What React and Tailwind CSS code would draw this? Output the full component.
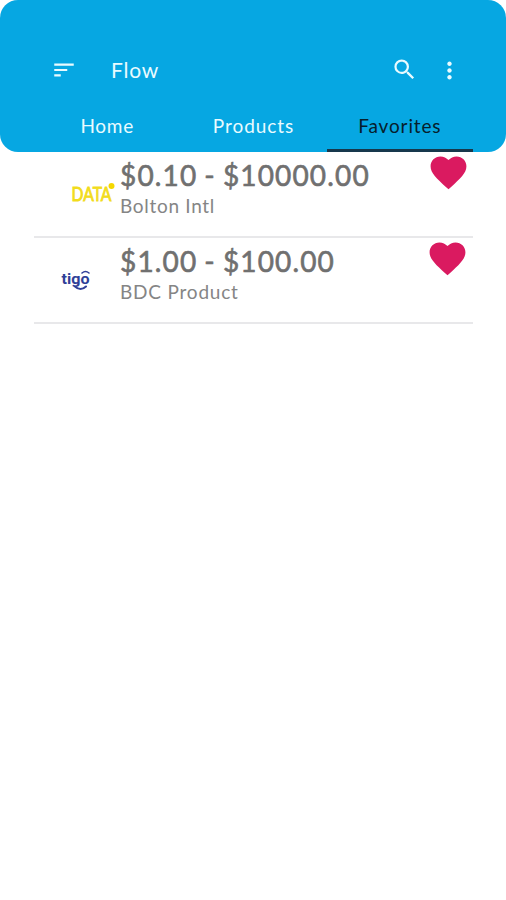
import React, { useState } from 'react';
import { MdFavorite, MdMoreVert, MdSearch, MdSort } from 'react-icons/md';

const tabs = [
  { id: 'home', label: 'Home', spacing: 'tracking-[0.7px]' },
  { id: 'products', label: 'Products', spacing: 'tracking-[0.95px]' },
  { id: 'favorites', label: 'Favorites', spacing: 'tracking-[0.85px]' }
];

const DataLogo = () => (
  <svg className="w-[85px] h-[85px] overflow-visible" viewBox="0 0 85 85" role="img" aria-label="Data">
    <text
      x="37.5"
      y="49"
      textLength="40"
      lengthAdjust="spacingAndGlyphs"
      className="fill-[#f2dc1c] stroke-[#f2dc1c] [stroke-width:0.9px] font-['Lato',sans-serif] text-[19px]"
    >
      DATA
    </text>
    <circle cx="77.5" cy="34" r="3" fill="#f5d800" />
  </svg>
);

const TigoLogo = () => (
  <svg className="w-[85px] h-[85px] overflow-visible" viewBox="0 0 85 85" role="img" aria-label="Tigo">
    <text
      x="27.5"
      y="45.5"
      textLength="28"
      lengthAdjust="spacingAndGlyphs"
      className="fill-[#2f3f98] font-['Roboto',sans-serif] text-[15px] font-bold"
    >
      tigo
    </text>
    <g fill="none" stroke="#2f3f98" strokeLinecap="round">
      <path d="M48 35q3.500-3 7 0" strokeWidth="1.6" />
      <path d="M41 48.500q5.500 5 11 0" strokeWidth="2.1" />
    </g>
  </svg>
);

const favorites = [
  {
    id: 1,
    range: '$0.10 - $10000.00',
    name: 'Bolton Intl',
    Logo: DataLogo,
    heart: 'mr-[3px]',
    nameSpacing: 'tracking-[0.7px]'
  },
  {
    id: 2,
    range: '$1.00 - $100.00',
    name: 'BDC Product',
    Logo: TigoLogo,
    heart: 'mr-[4px]',
    nameSpacing: 'tracking-[0.8px]'
  }
];

const Header = ({ active, onSelect }) => (
  <header className="h-[152px] pl-[34px] pr-[33px] pt-[48px] rounded-[18px] bg-[#06a7e2] text-[#e9fbff] flex flex-col">
    <div className="h-11 flex items-center">
      <button type="button" aria-label="Menu" className="ml-[17px]">
        <MdSort className="size-[26px]" />
      </button>
      <h1 className="ml-[34px] text-[21px] leading-6 tracking-[0.8px]">Flow</h1>
      <button type="button" aria-label="Search" className="ml-auto pb-[2px]">
        <MdSearch className="size-[27px]" />
      </button>
      <button type="button" aria-label="More" className="ml-[18px] mr-[10px]">
        <MdMoreVert className="size-[27px]" />
      </button>
    </div>
    <nav className="flex-1 grid grid-cols-3">
      {tabs.map((tab) => (
        <button
          key={tab.id}
          type="button"
          onClick={() => onSelect(tab.id)}
          className={[
            'border-b-[3px] pt-[10px] text-[19px] leading-none text-center',
            tab.spacing,
            active === tab.id ? 'border-[#17384c] text-[#06202c]' : 'border-transparent'
          ].join(' ')}
        >
          {tab.label}
        </button>
      ))}
    </nav>
  </header>
);

const App = () => {
  const [active, setActive] = useState('favorites');

  return (
    <div className="min-h-screen bg-white font-['Lato',sans-serif]">
      <Header active={active} onSelect={setActive} />
      <ul className="ml-[34px] mr-[33px]">
        {favorites.map(({ id, range, name, Logo, heart, nameSpacing }) => (
          <li key={id} className="h-[86px] border-b-2 border-[#e8e8ea] flex items-start">
            <Logo />
            <div className="flex-1 pl-[1px] pt-[5px] text-[#707070] whitespace-nowrap">
              <p className="text-[28px] leading-9 tracking-[1.15px] word-spacing-tight [word-spacing:-1.3px] [-webkit-text-stroke:0.6px_#707070]">
                {range}
              </p>
              <p className={`text-[19px] leading-[26px] text-[#858585] ${nameSpacing}`}>{name}</p>
            </div>
            <MdFavorite className={`size-[43px] -mt-[1px] shrink-0 text-[#da1a60] ${heart}`} />
          </li>
        ))}
      </ul>
    </div>
  );
};

export default App;
